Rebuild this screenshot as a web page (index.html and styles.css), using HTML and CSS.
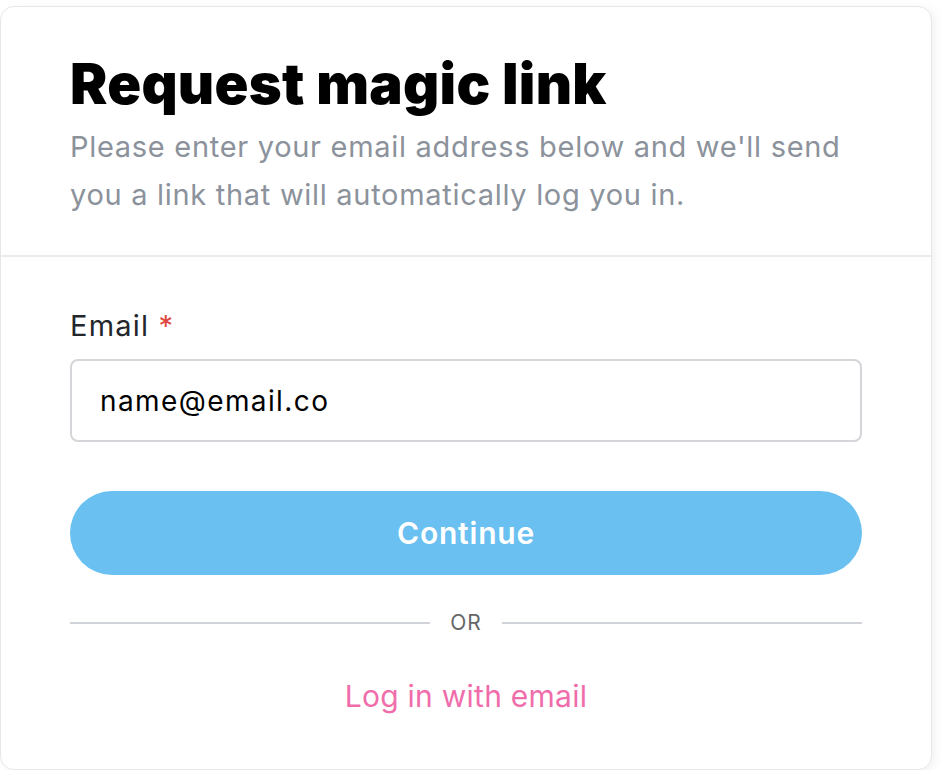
FILE: index.html
```html
<!DOCTYPE html>
<html lang="en">
<head>
<meta charset="utf-8">
<title>Request magic link</title>
<link rel="stylesheet" href="styles.css">
</head>
<body>
<div class="page">
  <section class="card">
    <header class="card-header">
      <h1 class="title">Request magic link</h1>
      <p class="subtitle">Please enter your email address below and we'll send you a link that will automatically log you in.</p>
    </header>
    <form class="card-body" onsubmit="return false">
      <label class="label" for="email">Email <span class="req">*</span></label>
      <input class="input" id="email" type="email" value="name@email.co">
      <button class="btn" type="submit">Continue</button>
      <div class="or-row">
        <span class="or-line"></span>
        <span class="or-text">OR</span>
        <span class="or-line"></span>
      </div>
      <a class="alt-link" href="#">Log in with email</a>
    </form>
  </section>
</div>
</body>
</html>
```

FILE: styles.css
```css
* { box-sizing: border-box; }
html, body { margin: 0; padding: 0; }
body {
  background: #ffffff;
  font-family: Inter, "Noto Sans", "Liberation Sans", sans-serif;
  width: 944px;
  height: 770px;
  overflow: hidden;
}
.page {
  padding-top: 6px;
  padding-right: 12px;
  display: flex;
}
.card {
  width: 932px;
  height: 764px;
  background: #fff;
  border: 1px solid #e6e7eb;
  border-radius: 14px;
  box-shadow: 4px 2px 10px rgba(0, 0, 0, 0.05);
}
.card-header {
  padding: 45px 69px 36px;
  border-bottom: 2px solid #ebebef;
}
.title {
  margin: 0;
  font-size: 56px;
  line-height: 65px;
  font-weight: 900;
  color: #000;
  letter-spacing: 0.3px;
}
.subtitle {
  margin: 6px 0 0;
  font-size: 29px;
  line-height: 48px;
  color: #8b929b;
  letter-spacing: 0.7px;
}
.card-body {
  padding: 49px 69px 0;
  display: flex;
  flex-direction: column;
}
.label {
  font-size: 29px;
  line-height: 40px;
  color: #23262b;
  font-weight: 400;
  letter-spacing: 1.2px;
}
.req { color: #e0463f; }
.input {
  margin-top: 13px;
  height: 83px;
  border: 2px solid #d4d6da;
  border-radius: 8px;
  padding: 0 28px;
  font-family: inherit;
  font-size: 28px;
  letter-spacing: 1.4px;
  color: #000;
  outline: none;
}
.btn {
  margin-top: 49px;
  height: 84px;
  border: none;
  border-radius: 42px;
  background: #6ac0f1;
  color: #fff;
  font-family: inherit;
  font-size: 30px;
  font-weight: 600;
  letter-spacing: 0.8px;
}
.or-row {
  margin-top: 36px;
  height: 24px;
  display: flex;
  align-items: center;
  gap: 20px;
}
.or-line {
  flex: 1;
  height: 2px;
  background: #d0d3d8;
}
.or-text {
  font-size: 21px;
  color: #666;
  line-height: 24px;
  letter-spacing: 1px;
}
.alt-link {
  margin-top: 41px;
  align-self: center;
  font-size: 30px;
  line-height: 40px;
  color: #f06dab;
  letter-spacing: 0.25px;
  text-decoration: none;
}
```
